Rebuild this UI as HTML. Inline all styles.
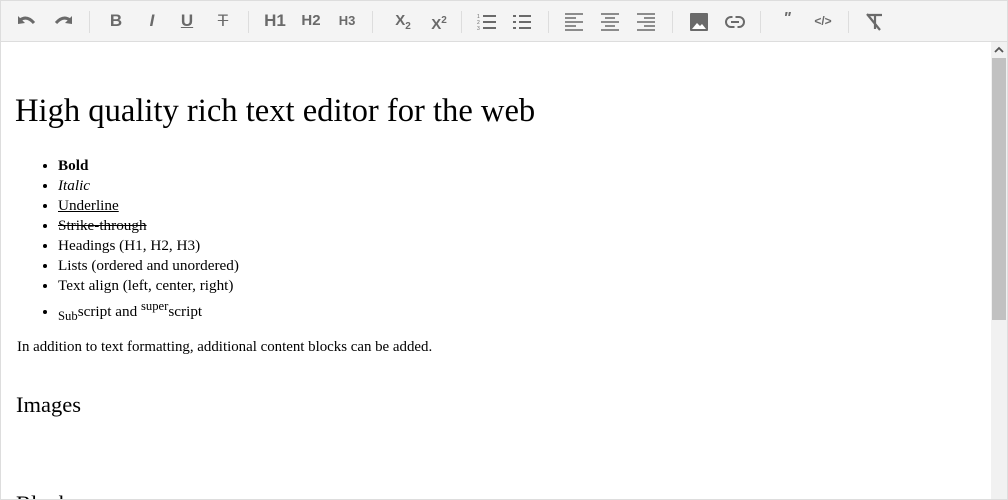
<!DOCTYPE html>
<html><head><style>
body{margin:0;width:1008px;height:500px;overflow:hidden;background:#fff;font-family:"Liberation Serif",serif;position:relative}
.frame{position:absolute;left:0;top:0;width:1006px;height:498px;border:1px solid #ddd}
.tb{position:absolute;left:1px;top:1px;width:1006px;height:40px;background:#f4f4f4;border-bottom:1px solid #ddd}
.i{position:absolute;top:0;height:40px;line-height:40px;transform:translateX(-50%);color:#6a6a6a;font-family:"Liberation Sans",sans-serif;font-weight:bold;font-size:17px;text-align:center}
.sep{position:absolute;top:10px;width:1px;height:22px;background:#ddd}
svg.s{position:absolute;top:11px;transform:translateX(-50%)}
.sb{position:absolute;left:991px;top:42px;width:16px;height:457px;background:#f1f1f1}
.th{position:absolute;left:992px;top:58px;width:14px;height:262px;background:#c1c1c1}
.t{position:absolute;white-space:nowrap;color:#000}
ul{position:absolute;left:0;margin:0;padding-left:57px;font-size:15.2px;line-height:20px}
.clip{position:absolute;left:1px;top:42px;width:990px;height:457px;overflow:hidden}
</style></head><body>
<div class="frame"></div>
<div class="tb">
<svg class="s" style="left:26px" width="22" height="20" viewBox="0 0 22 20"><path d="M4 8 Q11 3 18 11" stroke="#6a6a6a" stroke-width="3" fill="none"/><path d="M2 4 L2 12 L9 11 Z" fill="#6a6a6a"/></svg>
<svg class="s" style="left:62px" width="22" height="20" viewBox="0 0 22 20"><path d="M18 8 Q11 3 4 11" stroke="#6a6a6a" stroke-width="3" fill="none"/><path d="M20 4 L20 12 L13 11 Z" fill="#6a6a6a"/></svg>
<div class="sep" style="left:88px"></div>
<div class="i" style="left:115px">B</div>
<div class="i" style="left:151px;font-style:italic">I</div>
<div class="i" style="left:186px;text-decoration:underline">U</div>
<div class="i" style="left:222px;font-weight:normal;text-decoration:line-through">T</div>
<div class="sep" style="left:247px"></div>
<div class="i" style="left:274px">H1</div>
<div class="i" style="left:310px;font-size:15px">H2</div>
<div class="i" style="left:346px;font-size:13px">H3</div>
<div class="sep" style="left:371px"></div>
<div class="i" style="left:402px;font-size:15px">X<sub style="font-size:10px">2</sub></div>
<div class="i" style="left:438px;font-size:15px">X<sup style="font-size:10px">2</sup></div>
<div class="sep" style="left:460px"></div>
<svg class="s" style="left:486px" width="20" height="20" viewBox="0 0 20 20"><text x="0" y="6" font-size="5" fill="#6a6a6a" font-family="Liberation Sans">1</text><text x="0" y="12" font-size="5" fill="#6a6a6a" font-family="Liberation Sans">2</text><text x="0" y="18" font-size="5" fill="#6a6a6a" font-family="Liberation Sans">3</text><path d="M6 4H19M6 10H19M6 16H19" stroke="#6a6a6a" stroke-width="2"/></svg>
<svg class="s" style="left:521px" width="20" height="20" viewBox="0 0 20 20"><path d="M1 4H4M1 10H4M1 16H4M7 4H19M7 10H19M7 16H19" stroke="#6a6a6a" stroke-width="2"/></svg>
<div class="sep" style="left:547px"></div>
<svg class="s" style="left:573px" width="20" height="20" viewBox="0 0 20 20"><path d="M1 2H19M1 6H12M1 10H19M1 14H12M1 18H19" stroke="#6a6a6a" stroke-width="1.6"/></svg>
<svg class="s" style="left:609px" width="20" height="20" viewBox="0 0 20 20"><path d="M1 2H19M5 6H15M1 10H19M5 14H15M1 18H19" stroke="#6a6a6a" stroke-width="1.6"/></svg>
<svg class="s" style="left:645px" width="20" height="20" viewBox="0 0 20 20"><path d="M1 2H19M8 6H19M1 10H19M8 14H19M1 18H19" stroke="#6a6a6a" stroke-width="1.6"/></svg>
<div class="sep" style="left:671px"></div>
<svg class="s" style="left:698px" width="20" height="20" viewBox="0 0 20 20"><rect x="1" y="1" width="18" height="18" rx="1" fill="#6a6a6a"/><path d="M3 17 L8 11 L11 14 L13 12 L17 17Z" fill="#fff"/></svg>
<svg class="s" style="left:734px" width="22" height="20" viewBox="0 0 22 20"><rect x="2" y="5" width="18" height="10" rx="5" stroke="#6a6a6a" stroke-width="2" fill="none"/><path d="M7 10H15" stroke="#6a6a6a" stroke-width="2"/><path d="M10 4V6M12 14V16" stroke="#f4f4f4" stroke-width="3"/></svg>
<div class="sep" style="left:759px"></div>
<div class="i" style="left:786px;font-style:italic;font-size:16px;top:-2px">"</div>
<div class="i" style="left:822px;font-size:12px">&lt;/&gt;</div>
<div class="sep" style="left:847px"></div>
<svg class="s" style="left:873px" width="20" height="20" viewBox="0 0 20 20"><path d="M4 3H18M11 3V17M3 2L16 18" stroke="#6a6a6a" stroke-width="2.2"/></svg>
</div>
<div class="sb"></div><div class="th"></div>
<svg style="position:absolute;left:994px;top:46px" width="10" height="8" viewBox="0 0 10 8"><path d="M1 6L5 2L9 6" stroke="#555" stroke-width="1.8" fill="none"/></svg>
<div class="clip">
<div class="t" style="left:14px;top:51px;font-size:32.6px">High quality rich text editor for the web</div>
<ul style="top:114px">
<li><b>Bold</b></li>
<li><i>Italic</i></li>
<li><u>Underline</u></li>
<li><s>Strike-through</s></li>
<li>Headings (H1, H2, H3)</li>
<li>Lists (ordered and unordered)</li>
<li>Text align (left, center, right)</li>
<li><sub>Sub</sub>script and <sup>super</sup>script</li>
</ul>
<div class="t" style="left:16px;top:297px;font-size:14.9px">In addition to text formatting, additional content blocks can be added.</div>
<div class="t" style="left:15px;top:350px;font-size:22.5px">Images</div>
<div class="t" style="left:15px;top:449px;font-size:22.5px">Blocks</div>
</div>
</body></html>
